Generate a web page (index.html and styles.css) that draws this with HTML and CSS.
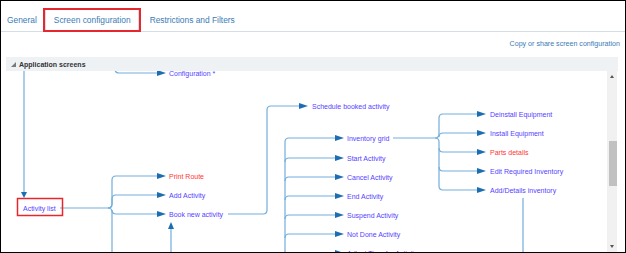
FILE: index.html
```html
<!DOCTYPE html>
<html lang="en">
<head>
    <meta charset="utf-8">
    <title>Screen configuration</title>
    <link rel="stylesheet" href="styles.css">
</head>
<body>
<div class="frame">
    <div class="tabs">
        <a class="tab">General</a>
        <a class="tab active">Screen configuration</a>
        <a class="tab">Restrictions and Filters</a>
    </div>

    <div class="tools">
        <a class="copy-link">Copy or share screen configuration</a>
    </div>

    <div class="panel">
        <div class="panel-head">
            <svg class="twisty" width="5" height="5" viewBox="0 0 5 5"><polygon points="5,0 5,5 0,5"/></svg>
            <span>Application screens</span>
        </div>
        <div class="panel-body">
            <svg class="diagram" width="601" height="181" viewBox="6 71 601 181">
                <!-- connectors -->
                <path class="link" d="M24,71 V192"/>
                <path class="link" d="M115,66 V69 Q115,73 119,73 H157"/>
                <path class="link" d="M60,208 H108 Q112,208 112,204 V180 Q112,176 116,176 H157"/>
                <path class="link" d="M108,208 Q112,208 112,204 V199 Q112,195 116,195 H157"/>
                <path class="link" d="M108,208 Q112,208 112,212 V253"/>
                <path class="link" d="M112,210 Q112,214 116,214 H157"/>
                <path class="link" d="M171,229 V253"/>
                <path class="link" d="M228,214 H263 Q267,214 267,210 V110 Q267,106 271,106 H299"/>

                <path class="link" d="M285,253 V142 Q285,138 289,138 H335"/>
                <path class="link" d="M285,162 Q285,158 289,158 H335"/>
                <path class="link" d="M285,181 Q285,177 289,177 H335"/>
                <path class="link" d="M285,200 Q285,196 289,196 H335"/>
                <path class="link" d="M285,219 Q285,215 289,215 H335"/>
                <path class="link" d="M285,238 Q285,234 289,234 H335"/>
                <path class="link" d="M285,257 Q285,253 289,253 H335"/>

                <path class="link" d="M393,138 H435 Q439,138 439,134 V118 Q439,114 443,114 H477"/>
                <path class="link" d="M439,137 Q439,133 443,133 H477"/>
                <path class="link" d="M435,138 Q439,138 439,142 V186 Q439,190 443,190 H477"/>
                <path class="link" d="M439,148 Q439,152 443,152 H477"/>
                <path class="link" d="M439,167 Q439,171 443,171 H477"/>
                <path class="link" d="M523,198 V253"/>

                <!-- arrow heads -->
                <polygon class="head" points="21,192 27,192 24,198"/>
                <polygon class="head" points="168,229 174,229 171,222"/>
                <polygon class="head" points="157,70 157,76 166,73"/>
                <polygon class="head" points="157,173 157,179 166,176"/>
                <polygon class="head" points="157,192 157,198 166,195"/>
                <polygon class="head" points="157,211 157,217 166,214"/>
                <polygon class="head" points="299,103 299,109 308,106"/>
                <polygon class="head" points="335,135 335,141 344,138"/>
                <polygon class="head" points="335,155 335,161 344,158"/>
                <polygon class="head" points="335,174 335,180 344,177"/>
                <polygon class="head" points="335,193 335,199 344,196"/>
                <polygon class="head" points="335,212 335,218 344,215"/>
                <polygon class="head" points="335,231 335,237 344,234"/>
                <polygon class="head" points="335,250 335,256 344,253"/>
                <polygon class="head" points="477,111 477,117 486,114"/>
                <polygon class="head" points="477,130 477,136 486,133"/>
                <polygon class="head" points="477,149 477,155 486,152"/>
                <polygon class="head" points="477,168 477,174 486,171"/>
                <polygon class="head" points="477,187 477,193 486,190"/>

                <!-- screens -->
                <rect class="picked" x="17.5" y="198.5" width="45" height="17"/>
                <text x="23" y="210.5">Activity list</text>
                <text x="169" y="75.5">Configuration *</text>
                <text class="warn" x="169" y="178.5">Print Route</text>
                <text x="169" y="197.5">Add Activity</text>
                <text x="169" y="216.5">Book new activity</text>
                <text x="312" y="108.5">Schedule booked activity</text>
                <text x="347" y="140.5">Inventory grid</text>
                <text x="347" y="160.5">Start Activity</text>
                <text x="347" y="179.5">Cancel Activity</text>
                <text x="347" y="198.5">End Activity</text>
                <text x="347" y="217.5">Suspend Activity</text>
                <text x="347" y="236.5">Not Done Activity</text>
                <text x="347" y="255.5">Adjust Time for Activity</text>
                <text x="490" y="116.5">Deinstall Equipment</text>
                <text x="490" y="135.5">Install Equipment</text>
                <text class="warn" x="490" y="154.5">Parts details</text>
                <text x="490" y="173.5">Edit Required Inventory</text>
                <text x="490" y="192.5">Add/Details inventory</text>
            </svg>
            <div class="scrollbar">
                <i class="arrow-up"></i>
                <i class="thumb"></i>
                <i class="arrow-down"></i>
            </div>
        </div>
    </div>
</div>
</body>
</html>
```

FILE: styles.css
```css
html, body {
    margin: 0;
    padding: 0;
    background: #ffffff;
    font-family: "Liberation Sans", Arial, sans-serif;
}

.frame {
    width: 626px;
    height: 253px;
    box-sizing: border-box;
    border: 1px solid #000000;
    overflow: hidden;
}

.tabs {
    display: flex;
    align-items: flex-end;
    height: 30px;
    border-bottom: 1px solid #d5dde5;
}

.tab {
    display: flex;
    align-items: center;
    box-sizing: border-box;
    height: 24px;
    margin-bottom: -1px;
    padding: 0 4px;
    border: 2px solid transparent;
    font-size: 8.4px;
    color: #3b7bb6;
}

.tab.active {
    padding: 0 8px 0 9px;
    border-color: #e8262e;
    background: #ffffff;
    box-shadow: inset 1px 0 0 #d5dde5, inset -1px 0 0 #d5dde5;
}

.tab:last-child {
    padding-left: 7px;
}

.tools {
    height: 18px;
    line-height: 18px;
    margin-bottom: 7px;
    padding-right: 5px;
    text-align: right;
}

.copy-link {
    font-size: 7.1px;
    color: #3b7bb6;
}

.panel {
    margin: 0 7px 0 5px;
}

.panel-head {
    display: flex;
    align-items: center;
    height: 14px;
    padding-left: 5px;
    background: #eef2f5;
    font-size: 7px;
    font-weight: bold;
    color: #333333;
}

.twisty {
    fill: #7a7a7a;
    margin-right: 3px;
}

.panel-body {
    display: flex;
    height: 181px;
}

.diagram {
    display: block;
    flex: none;
}

.diagram text {
    font-family: "Liberation Sans", Arial, sans-serif;
    font-size: 7px;
    fill: #5543ff;
}

.diagram .warn {
    fill: #ff3535;
}

.diagram .link {
    fill: none;
    stroke: #72aedb;
    stroke-width: 1.2;
}

.diagram .head {
    fill: #1d6db3;
}

.diagram .picked {
    fill: none;
    stroke: #e8262e;
    stroke-width: 1.5;
}

.scrollbar {
    position: relative;
    width: 10px;
    background: #f1f1f1;
}

.scrollbar i {
    display: block;
    position: absolute;
}

.arrow-up {
    left: 3px;
    top: 4px;
    border-left: 2px solid transparent;
    border-right: 2px solid transparent;
    border-bottom: 3px solid #555555;
}

.arrow-down {
    left: 3px;
    bottom: 4px;
    border-left: 2px solid transparent;
    border-right: 2px solid transparent;
    border-top: 3px solid #555555;
}

.thumb {
    left: 2px;
    right: 0;
    top: 70px;
    height: 45px;
    background: #c1c1c1;
}
```
